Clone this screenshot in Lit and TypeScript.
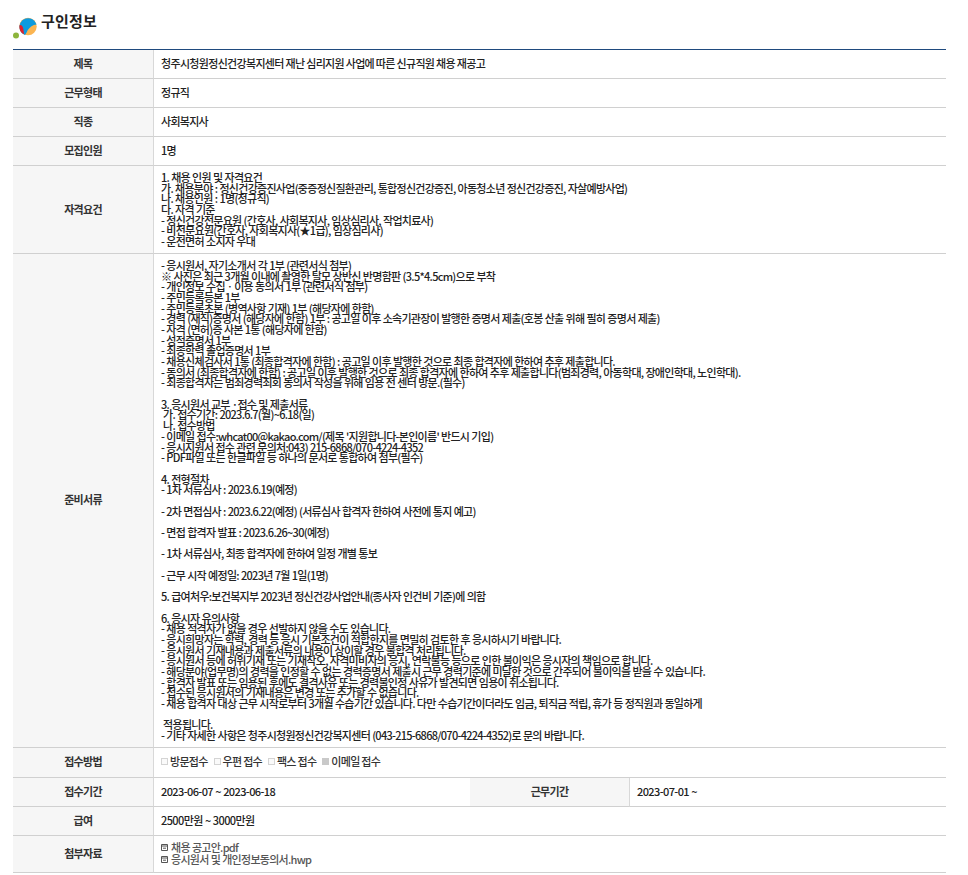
import { LitElement, html, css, svg } from "lit";
import { customElement } from "lit/decorators.js";

const req = [
  "1. 채용 인원 및 자격요건",
  "가. 채용분야 : 정신건강증진사업(중증정신질환관리, 통합정신건강증진, 아동청소년 정신건강증진, 자살예방사업)",
  "나. 채용인원 : 1명(정규직)",
  "다. 자격 기준",
  "- 정신건강전문요원 (간호사, 사회복지사, 임상심리사, 작업치료사)",
  "- 비전문요원(간호사, 사회복지사(★1급), 임상심리사)",
  "- 운전면허 소지자 우대",
];
const docs = [
  "- 응시원서, 자기소개서 각 1부 (관련서식 첨부)",
  "※ 사진은 최근 3개월 이내에 촬영한 탈모 상반신 반명함판 (3.5*4.5cm)으로 부착",
  "- 개인정보 수집ㆍ이용 동의서 1부 (관련서식 첨부)",
  "- 주민등록등본 1부",
  "- 주민등록초본 (병역사항 기재) 1부 (해당자에 한함)",
  "- 경력 (재직)증명서 (해당자에 한함) 1부 : 공고일 이후 소속기관장이 발행한 증명서 제출(호봉 산출 위해 필히 증명서 제출)",
  "- 자격 (면허)증 사본 1통 (해당자에 한함)",
  "- 성적증명서 1부",
  "- 최종학력 졸업증명서 1부",
  "- 채용신체검사서 1통 (최종합격자에 한함) : 공고일 이후 발행한 것으로 최종 합격자에 한하여 추후 제출합니다.",
  "- 동의서 (최종합격자에 한함) : 공고일 이후 발행한 것으로 최종 합격자에 한하여 추후 제출합니다(범죄경력, 아동학대, 장애인학대, 노인학대).",
  "- 최종합격자는 범죄경력죄회 동의서 작성을 위해 임용 전 센터 방문.(필수)",
  "",
  "3. 응시원서 교부 ·접수 및 제출서류",
  " 가. 접수기간: 2023.6.7(월)~6.18(일)",
  " 나. 접수방법",
  "- 이메일 접수:whcat00@kakao.com/(제목 '지원합니다-본인이름' 반드시 기입)",
  "- 응시지원서 접수 관련 문의처:043) 215-6868/070-4224-4352",
  "- PDF파일 또는 한글파일 등 하나의 문서로 통합하여 첨부(필수)",
  "",
  "4. 전형절차",
  "- 1차 서류심사 : 2023.6.19(예정)",
  "",
  "- 2차 면접심사 : 2023.6.22(예정) (서류심사 합격자 한하여 사전에 통지 예고)",
  "",
  "- 면접 합격자 발표 : 2023.6.26~30(예정)",
  "",
  "- 1차 서류심사, 최종 합격자에 한하여 일정 개별 통보",
  "",
  "- 근무 시작 예정일: 2023년 7월 1일(1명)",
  "",
  "5. 급여처우:보건복지부 2023년 정신건강사업안내(종사자 인건비 기준)에 의함",
  "",
  "6. 응시자 유의사항",
  "- 채용 적격자가 없을 경우 선발하지 않을 수도 있습니다.",
  "- 응시희망자는 학력, 경력 등 응시 기본조건이 적합한지를 면밀히 검토한 후 응시하시기 바랍니다.",
  "- 응시원서 기재내용과 제출서류의 내용이 상이할 경우 불합격 처리됩니다.",
  "- 응시원서 등에 허위기재 또는 기재착오, 자격미비자의 응시, 연락불능 등으로 인한 불이익은 응시자의 책임으로 합니다.",
  "- 해당분야(업무명)의 경력을 인정할 수 없는 경력증명서 제출시 근무 경력기준에 미달한 것으로 간주되어 불이익을 받을 수 있습니다.",
  "- 합격자 발표 또는 임용된 후에도 결격사유 또는 경력불인정 사유가 발견되면 임용이 취소됩니다.",
  "- 접수된 응시원서의 기재내용은 변경 또는 추가할 수 없습니다.",
  "- 채용 합격자 대상 근무 시작로부터 3개월 수습기간 있습니다. 다만 수습기간이더라도 임금, 퇴직금 적립, 휴가 등 정직원과 동일하게",
  "",
  " 적용됩니다.",
  "- 기타 자세한 사항은 청주시청원정신건강복지센터 (043-215-6868/070-4224-4352)로 문의 바랍니다.",
];

const fileIcon = svg`<svg class="file" width="7" height="7" viewBox="0 0 7 7"><path d="M0.5 0.5H6.5V6.5H0.5Z M0.5 2H6.5 M2 4.2H5" fill="none" stroke="#555" stroke-width="1"/></svg>`;

@customElement("app-root")
export class AppRoot extends LitElement {
  static styles = css`
    :host {
      display: block;
      font-family: "Noto Sans CJK KR", "Noto Sans", sans-serif;
      color: #222;
      background: #fff;
    }
    .wrap { padding: 0 22px 0 13px; }
    .title {
      display: flex;
      align-items: flex-start;
      height: 49px;
      font-size: 15px;
      font-weight: 700;
      line-height: 22px;
      color: #222;
      letter-spacing: 0.2px;
      gap: 4px;
      padding-top: 10px;
      box-sizing: border-box;
    }
    .logo { display: block; margin-top: 5px; }
    table {
      width: 933px;
      border-collapse: separate;
      border-spacing: 0;
      table-layout: fixed;
      border-top: 1px solid #1f4a7e;
      font-size: 11px;
      letter-spacing: -0.72px;
      word-spacing: 0.35px;
      font-weight: 500;
    }
    th, td {
      border-bottom: 1px solid #d0d0d0;
      padding: 0 0 1px;
      height: 27px;
      line-height: 10.7px;
      box-sizing: content-box;
      vertical-align: middle;
    }
    tr.tall th, tr.tall td { height: 28px; }
    tr.files th, tr.files td { height: 35px; }
    th {
      background: #f6f6f6;
      font-weight: 700;
      text-align: center;
      color: #333;
    }
    th.l { border-right: 1px solid #d8d8d8; }
    td { padding-left: 7px; text-align: left; color: #222; }
    td.wide { letter-spacing: -0.68px; word-spacing: 0; }
    td.date { letter-spacing: -0.6px; }
    .lines { white-space: pre; line-height: 10.7px; padding: 6px 0 5px; }
    .lines div { height: 10.7px; }
    .checks { display: flex; align-items: center; color: #333; word-spacing: 0; }
    .cb {
      width: 7px; height: 7px;
      box-sizing: border-box;
      border: 1px solid #d4d4d4;
      background: #fafafa;
      margin-right: 2px;
      flex: none;
    }
    .cb.on { background: #c9c9c9; border-color: #c9c9c9; }
    .chk { margin-right: 6px; }
    .f { display: flex; align-items: center; gap: 3px; color: #555; height: 11.5px; }
    .file { display: block; }
  `;

  private lines(a: string[]) {
    return html`<div class="lines">${a.map((l) => html`<div>${l}</div>`)}</div>`;
  }

  render() {
    return html`<div class="wrap">
      <div class="title">
        <svg class="logo" width="24" height="24" viewBox="0 0 24 24">
          <circle cx="3" cy="20.5" r="3" fill="#8db53c" />
          <circle cx="15" cy="11.5" r="8.7" fill="#fbb552" />
          <path d="M6.8 14.5A8.7 8.7 0 0 1 23.6 9.5C20 9.8 16 12 13.6 17.5 13 18.7 12.5 19.6 12 20A8.7 8.7 0 0 1 6.8 14.5Z" fill="#0c9be0" />
          <path d="M6.5 10.5C8.5 9 10.3 12 10.6 15.5 10.8 17.5 11 19 11.5 19.6A8.7 8.7 0 0 1 6.5 10.5Z" fill="#e0202c" />
        </svg>
        <span>구인정보</span>
      </div>
      <table>
        <colgroup><col style="width:141px" /><col style="width:316px" /><col style="width:160px" /><col /></colgroup>
        <tbody>
          <tr><th class="l">제목</th><td class="wide" colspan="3">청주시청원정신건강복지센터 재난 심리지원 사업에 따른 신규직원 채용 재공고</td></tr>
          <tr><th class="l">근무형태</th><td colspan="3">정규직</td></tr>
          <tr><th class="l">직종</th><td colspan="3">사회복지사</td></tr>
          <tr><th class="l">모집인원</th><td colspan="3">1명</td></tr>
          <tr><th class="l">자격요건</th><td colspan="3">${this.lines(req)}</td></tr>
          <tr><th class="l">준비서류</th><td colspan="3">${this.lines(docs)}</td></tr>
          <tr class="tall">
            <th class="l">접수방법</th>
            <td colspan="3">
              <div class="checks">
                <span class="cb"></span><span class="chk">방문접수</span>
                <span class="cb"></span><span class="chk">우편 접수</span>
                <span class="cb"></span><span class="chk">팩스 접수</span>
                <span class="cb on"></span><span class="chk">이메일 접수</span>
              </div>
            </td>
          </tr>
          <tr>
            <th class="l">접수기간</th><td class="date">2023-06-07 ~ 2023-06-18</td>
            <th class="l">근무기간</th><td class="date">2023-07-01 ~</td>
          </tr>
          <tr><th class="l">급여</th><td class="date" colspan="3">2500만원 ~ 3000만원</td></tr>
          <tr class="files">
            <th class="l">첨부자료</th>
            <td colspan="3">
              <div class="f">${fileIcon}<span>채용 공고안.pdf</span></div>
              <div class="f">${fileIcon}<span>응시원서 및 개인정보동의서.hwp</span></div>
            </td>
          </tr>
        </tbody>
      </table>
    </div>`;
  }
}
